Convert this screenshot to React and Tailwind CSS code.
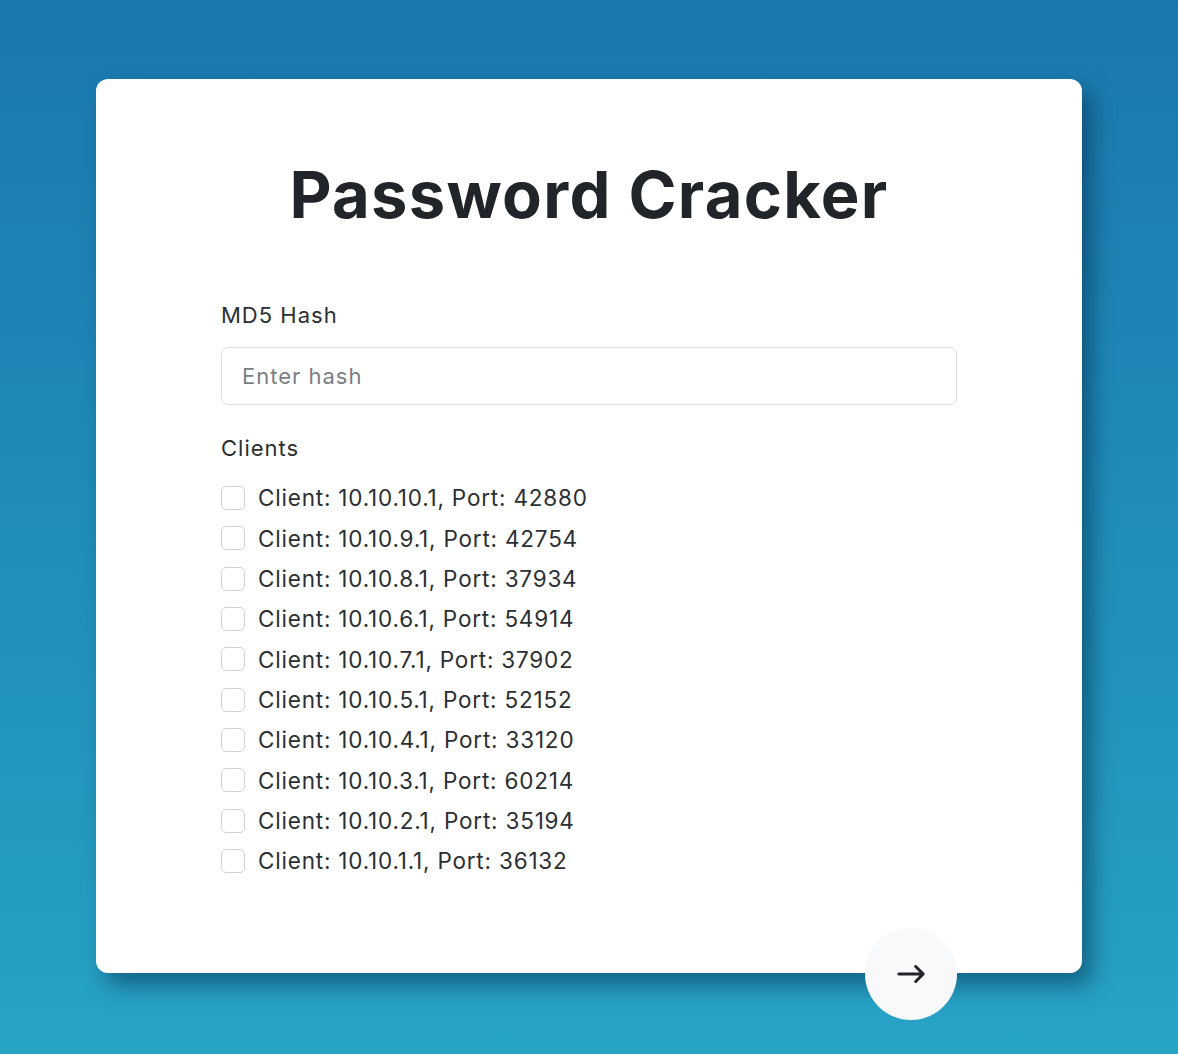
import React from "react";
import { BsArrowRight } from "react-icons/bs";

const clients = [
  ["10.10.10.1", 42880],
  ["10.10.9.1", 42754],
  ["10.10.8.1", 37934],
  ["10.10.6.1", 54914],
  ["10.10.7.1", 37902],
  ["10.10.5.1", 52152],
  ["10.10.4.1", 33120],
  ["10.10.3.1", 60214],
  ["10.10.2.1", 35194],
  ["10.10.1.1", 36132],
];

export default function App() {
  return (
    <div
      className="min-h-[1054px] w-full bg-linear-to-b from-[#1a78ae] to-[#27a3c6] pt-[79px] pl-[96px]"
      style={{ fontFamily: "Inter, 'Noto Sans', sans-serif" }}
    >
      <div className="relative w-[986px] h-[894px] bg-white rounded-[12px] shadow-[10px_12px_22px_rgba(0,40,70,0.5)] px-[125px] pt-[83px]">
        <h1 className="text-center text-[65px] leading-[65px] font-bold text-[#212529] tracking-[1.3px]">
          Password Cracker
        </h1>
        <div className="mt-[73px] text-[22px] leading-[31px] text-[#2b2f33] tracking-[1px]">MD5 Hash</div>
        <input
          type="text"
          placeholder="Enter hash"
          className="mt-[16px] block w-full h-[58px] rounded-[7px] border border-[#dcdfe3] px-[20px] text-[22px] tracking-[1px] text-[#212529] placeholder:text-[#7a7f85] outline-none"
        />
        <div className="mt-[28px] text-[22px] leading-[31px] text-[#2b2f33] tracking-[1px]">Clients</div>
        <div className="mt-[14px] flex flex-col">
          {clients.map(([ip, port]) => (
            <label key={ip} className="flex items-center h-[40.33px] gap-[13px]">
              <span className="w-[24px] h-[24px] rounded-[5px] border border-[#cfd3d7] bg-white shrink-0" />
              <span className="text-[22.5px] text-[#2b2f33] tracking-[0.8px]">
                Client: {ip}, Port: {port}
              </span>
            </label>
          ))}
        </div>
        <button className="absolute left-[769px] top-[849px] w-[92px] h-[92px] rounded-full bg-[#f8f9fa] flex items-center justify-center text-[#212529]">
          <BsArrowRight size={30} stroke="currentColor" strokeWidth={0.6} />
        </button>
      </div>
    </div>
  );
}
